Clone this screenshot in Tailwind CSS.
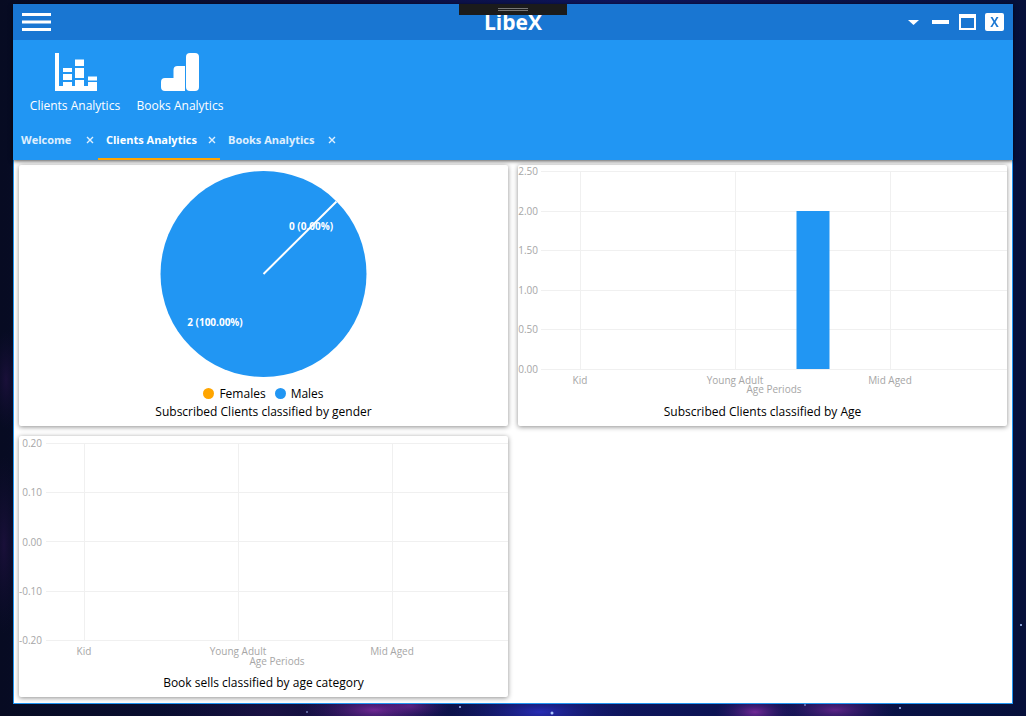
<!DOCTYPE html>
<html lang="en">
<head>
<meta charset="utf-8">
<title>LibeX</title>
<script src="https://cdn.jsdelivr.net/npm/@tailwindcss/browser@4"></script>
</head>
<body class="relative isolate flex min-h-screen flex-col overflow-x-hidden bg-[#080c2a] px-[13px] pt-1 pb-3 font-['Open_Sans','Noto_Sans',sans-serif] text-xs leading-4 text-black">
  <!-- Night sky behind the window -->
  <svg class="absolute inset-0 -z-10 h-full w-full" viewBox="0 0 1026 716" preserveAspectRatio="none" aria-hidden="true">
    <defs>
      <linearGradient id="sky" x1="0" x2="1" y1="0" y2="0">
        <stop offset="0" stop-color="#070b22"/><stop offset=".35" stop-color="#0b1040"/><stop offset=".6" stop-color="#0e155c"/><stop offset="1" stop-color="#06103a"/>
      </linearGradient>
      <radialGradient id="violet"><stop offset="0" stop-color="#8a2da8" stop-opacity=".8"/><stop offset="1" stop-color="#3b1670" stop-opacity="0"/></radialGradient>
      <radialGradient id="indigo"><stop offset="0" stop-color="#2a2fc0" stop-opacity=".9"/><stop offset="1" stop-color="#141a70" stop-opacity="0"/></radialGradient>
      <radialGradient id="plum"><stop offset="0" stop-color="#2c1450" stop-opacity=".5"/><stop offset="1" stop-color="#1a0f40" stop-opacity="0"/></radialGradient>
    </defs>
    <rect width="1026" height="716" fill="url(#sky)"/>
    <ellipse cx="270" cy="712" rx="110" ry="26" fill="url(#plum)"/>
    <ellipse cx="375" cy="710" rx="75" ry="20" fill="url(#violet)"/>
    <ellipse cx="410" cy="706" rx="40" ry="12" fill="url(#violet)" opacity=".6"/>
    <ellipse cx="540" cy="712" rx="90" ry="22" fill="url(#indigo)"/>
    <ellipse cx="755" cy="712" rx="40" ry="16" fill="url(#violet)"/>
    <ellipse cx="835" cy="710" rx="60" ry="18" fill="url(#violet)" opacity=".8"/>
    <ellipse cx="4" cy="545" rx="16" ry="90" fill="url(#plum)"/>
    <ellipse cx="6" cy="380" rx="14" ry="50" fill="url(#plum)"/>
    <g fill="#a9c4ff">
      <circle cx="552" cy="713" r="1.500"/><circle cx="460" cy="707" r="1"/><circle cx="900" cy="708" r="1"/><circle cx="1021" cy="625" r="1"/><circle cx="307" cy="712" r="1" opacity=".6"/><circle cx="805" cy="705" r="1" opacity=".6"/>
    </g>
  </svg>

  <div class="flex grow flex-col bg-white">
    <header class="relative z-10 bg-[#2196f3] text-white shadow-[0_1px_4px_rgba(0,0,0,0.7)]">
      <div class="relative grid h-9 grid-cols-[1fr_auto_1fr] items-center bg-[#1976d2]">
        <button type="button" aria-label="Menu" class="ml-[9px] justify-self-start">
          <svg class="block h-5 w-[29px]" viewBox="0 0 29 20" fill="#fff"><path d="M0 1h29v3H0zM0 8.500h29v3H0zM0 16h29v3H0z"/></svg>
        </button>
        <h1 class="text-[21px] leading-8 font-bold">LibeX</h1>
        <div class="flex items-center gap-2 justify-self-end pr-[9px]">
          <button type="button" aria-label="Options" class="mr-[5px]"><svg class="block h-5 w-[11px]" viewBox="0 0 11 20"><path d="M0 8h11L5.500 13z" fill="#fff"/></svg></button>
          <button type="button" aria-label="Minimize"><svg class="block h-5 w-[17px]" viewBox="0 0 17 20"><path d="M0 8h17v4H0z" fill="#fff"/></svg></button>
          <button type="button" aria-label="Maximize" class="ml-[2px]"><svg class="block h-5 w-[17px]" viewBox="0 0 17 20"><path fill-rule="evenodd" d="M0 2h17v16H0zM2 6v10h13V6z" fill="#fff"/></svg></button>
          <button type="button" aria-label="Close" class="ml-[1px]"><svg class="block h-5 w-[19px]" viewBox="0 0 19 20"><rect y="1" width="19" height="18" rx="2" fill="#fff"/><path d="M5.500 5h2l2 3.600L11.500 5h2l-3 5 3.200 5h-2.100l-2.200-3.700L7.300 15h-2l3.200-5z" fill="#1976d2"/></svg></button>
        </div>
        <!-- Debug toolbar handle over the title -->
        <div class="absolute top-0 left-1/2 flex h-[11px] w-[108px] -translate-x-1/2 flex-col items-center justify-center gap-px bg-[#1b1b1b]">
          <span class="h-px w-[30px] bg-[#777]"></span><span class="h-px w-[30px] bg-[#777]"></span>
        </div>
      </div>

      <div class="flex h-20 pt-3 pl-[9px]">
        <button type="button" class="flex w-[106px] flex-col items-center gap-[6px]">
          <svg class="h-[40px] w-[43px]" viewBox="0 0 43 40" fill="#fff"><path d="M1 1h4v33h4v-4h9v4h3v-6h9v6h4v-4h9v9H1zM9 16h9v4H9zM9 22h9v6H9zM21 7.500h9V14h-9zM21 16h9v10h-9zM34 24.500h9v4h-9z"/></svg>
          <span class="whitespace-nowrap">Clients Analytics</span>
        </button>
        <button type="button" class="flex w-[104px] flex-col items-center gap-[6px]">
          <svg class="h-[40px] w-[38px]" viewBox="0 0 38 40" fill="#fff"><path d="M4 39a4 4 0 0 1-4-4v-5a4 4 0 0 1 4-4h8.500v-8a4 4 0 0 1 4-4H24v25z"/><rect x="25" y="1" width="13" height="38" rx="4"/></svg>
          <span class="whitespace-nowrap">Books Analytics</span>
        </button>
      </div>

      <nav class="flex h-10 text-[11px] font-bold whitespace-nowrap">
        <div class="flex w-[85px] items-center justify-between pr-1 pl-2 text-white/85"><a href="#welcome">Welcome</a><button type="button" aria-label="Close Welcome"><svg class="block size-[8px]" viewBox="0 0 8 8" stroke="currentColor" stroke-width="1.400"><path d="M1 1l6 6M7 1L1 7"/></svg></button></div>
        <div class="flex w-[122px] items-center justify-between border-y-2 border-t-transparent border-b-[#ffa500] pr-1 pl-2"><a href="#clients" aria-current="page">Clients Analytics</a><button type="button" aria-label="Close Clients Analytics" class="text-white/85"><svg class="block size-[8px]" viewBox="0 0 8 8" stroke="currentColor" stroke-width="1.400"><path d="M1 1l6 6M7 1L1 7"/></svg></button></div>
        <div class="flex w-[120px] items-center justify-between pr-1 pl-2 text-white/85"><a href="#books">Books Analytics</a><button type="button" aria-label="Close Books Analytics"><svg class="block size-[8px]" viewBox="0 0 8 8" stroke="currentColor" stroke-width="1.400"><path d="M1 1l6 6M7 1L1 7"/></svg></button></div>
      </nav>
    </header>

    <main class="grid grow grid-cols-2 content-start gap-[10px] border border-t-0 border-[#2196f3] px-[5px] pt-[5px] pb-[6px]">
      <figure class="rounded-xs bg-white pb-1 text-center shadow-[0_1px_5px_rgba(0,0,0,0.45)]">
        <svg class="block h-auto w-full" viewBox="0 0 489 220" role="img" aria-label="Clients by gender">
          <circle cx="244.500" cy="109" r="103" fill="#2196f3"/>
          <path d="M244.500 109L317.500 36.500" stroke="#fff" stroke-width="2"/>
          <g class="text-[10px] font-bold" fill="#fff" text-anchor="middle"><text x="292" y="65">0 (0.00%)</text><text x="196" y="161">2 (100.00%)</text></g>
        </svg>
        <div class="flex h-[17px] items-center justify-center gap-[9px]">
          <span class="flex items-center gap-[5px]"><i class="size-[11px] rounded-full bg-[#ffa500]"></i>Females</span>
          <span class="flex items-center gap-[5px]"><i class="size-[11px] rounded-full bg-[#2196f3]"></i>Males</span>
        </div>
        <figcaption class="leading-5">Subscribed Clients classified by gender</figcaption>
      </figure>

      <figure class="rounded-xs bg-white pb-1 text-center shadow-[0_1px_5px_rgba(0,0,0,0.45)]">
        <svg class="block h-auto w-full" viewBox="0 0 489 237" role="img" aria-label="Clients by age">
          <path d="M23 6.500H489M23 46.500H489M23 85.500H489M23 125.500H489M23 164.500H489M23 204.500H489M62.500 6V204M217.500 6V204M372.500 6V204" stroke="#f0f0f0" fill="none"/>
          <rect x="278.500" y="46" width="33" height="158" fill="#2196f3"/>
          <g class="text-[10px]" fill="#a6a6a6">
            <g text-anchor="end"><text x="20" y="10">2.50</text><text x="20" y="50">2.00</text><text x="20" y="89">1.50</text><text x="20" y="129">1.00</text><text x="20" y="168">0.50</text><text x="20" y="208">0.00</text></g>
            <g text-anchor="middle"><text x="62" y="219">Kid</text><text x="217" y="219">Young Adult</text><text x="372" y="219">Mid Aged</text><text x="256" y="228">Age Periods</text></g>
          </g>
        </svg>
        <figcaption class="leading-5">Subscribed Clients classified by Age</figcaption>
      </figure>

      <figure class="rounded-xs bg-white pb-1 text-center shadow-[0_1px_5px_rgba(0,0,0,0.45)]">
        <svg class="block h-auto w-full" viewBox="0 0 489 237" role="img" aria-label="Book sells by age">
          <path d="M27 7.500H489M27 56.500H489M27 105.500H489M27 155.500H489M27 204.500H489M65.500 7V204M219.500 7V204M373.500 7V204" stroke="#f0f0f0" fill="none"/>
          <g class="text-[10px]" fill="#a6a6a6">
            <g text-anchor="end"><text x="23" y="11">0.20</text><text x="23" y="60">0.10</text><text x="23" y="110">0.00</text><text x="23" y="159">-0.10</text><text x="23" y="208">-0.20</text></g>
            <g text-anchor="middle"><text x="65" y="219">Kid</text><text x="219" y="219">Young Adult</text><text x="373" y="219">Mid Aged</text><text x="258" y="229">Age Periods</text></g>
          </g>
        </svg>
        <figcaption class="leading-5">Book sells classified by age category</figcaption>
      </figure>
    </main>
  </div>
</body>
</html>
